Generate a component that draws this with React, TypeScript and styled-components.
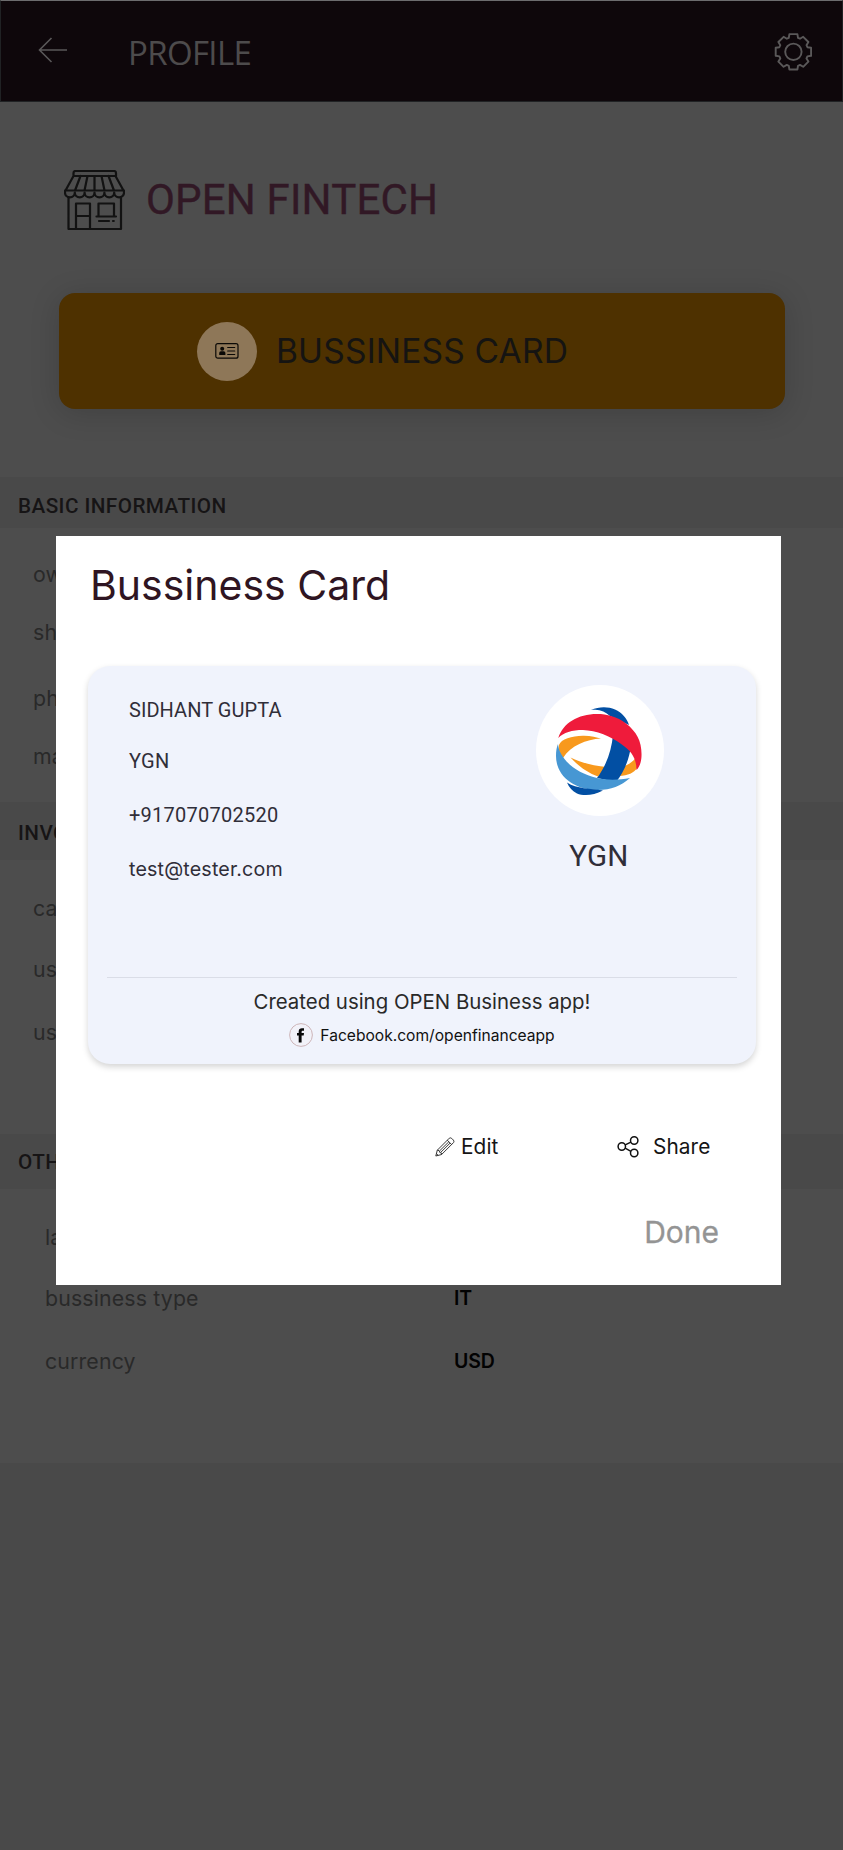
import React from "react";
import styled, { createGlobalStyle } from "styled-components";

const GlobalStyle = createGlobalStyle`
  * { box-sizing: border-box; }
  body { margin: 0; background: #494949; }
`;

const sans = `Roboto, "Open Sans", sans-serif`;
const wide = `Inter, Roboto, sans-serif`;

const Page = styled.div`
  position: relative;
  width: 843px;
  height: 1850px;
  overflow: hidden;
  background: #494949;
  font-family: ${sans};
`;

const Header = styled.header`
  display: flex;
  align-items: center;
  height: 102px;
  padding: 1px 30px 0 37px;
  background: #0e070b;
  border: 1px solid #202224;
  border-top-color: #6c6c6e;
`;

const HeaderTitle = styled.h1`
  flex: 1;
  margin: 2px 0 0 59px;
  font: 400 33px/44px "Open Sans", sans-serif;
  letter-spacing: -0.65px;
  color: #4d4b4c;
`;

const BackIcon = styled.svg`
  display: block;
  margin-bottom: 4px;
`;

const Hero = styled.section`
  height: 375px;
  padding: 68px 58px 0 59px;
  background: #4d4d4d;
`;

const Company = styled.div`
  display: flex;
  align-items: center;
  gap: 21px;
  padding-left: 5px;
`;

const CompanyName = styled.h2`
  margin: 0 0 2px;
  font-size: 42px;
  font-weight: 400;
  line-height: 59px;
  letter-spacing: 0.19px;
  color: #311825;
  -webkit-text-stroke: 0.4px #311825;
`;

const CardButton = styled.button`
  display: flex;
  align-items: center;
  gap: 19px;
  width: 726px;
  height: 116px;
  margin-top: 62px;
  padding: 0 0 0 138px;
  border: 0;
  border-radius: 16px;
  background: #4e3100;
  box-shadow: 0 4px 30px rgba(0, 0, 0, 0.16);
  font: 400 33.6px/40px ${wide};
  letter-spacing: 0.15px;
  color: #151412;
`;

const IconDisc = styled.span`
  display: flex;
  align-items: center;
  justify-content: center;
  width: 60px;
  height: 59px;
  border-radius: 50%;
  background: #8e7758;
`;

const Band = styled.h3<{ $height: number; $drop: number }>`
  display: flex;
  align-items: center;
  height: ${(p) => p.$height}px;
  margin: 0;
  padding: ${(p) => p.$drop}px 0 0 18px;
  background: #494949;
  font-size: 20.7px;
  font-weight: 500;
  line-height: 24px;
  letter-spacing: 0.44px;
  color: #161415;
`;

const Details = styled.dl`
  display: flex;
  flex-direction: column;
  height: 274px;
  margin: 0;
  background: #4d4d4d;
`;

const DetailRow = styled.div<{ $before: number; $indent: number }>`
  display: flex;
  height: 24px;
  margin-top: ${(p) => p.$before}px;
  padding-left: ${(p) => p.$indent}px;
  line-height: 24px;
  font-family: ${wide};
`;

const Label = styled.dt`
  width: 409px;
  font-size: 21.3px;
  letter-spacing: 0.15px;
  color: #292929;
`;

const Value = styled.dd`
  margin: 0;
  font-size: 19.5px;
  font-weight: 600;
  letter-spacing: -0.2px;
  color: #020202;
`;

const Modal = styled.div`
  position: absolute;
  left: 56px;
  top: 536px;
  width: 725px;
  height: 749px;
  padding: 24px 25px 0 32px;
  background: #fff;
`;

const ModalTitle = styled.h2`
  margin: 0;
  padding-left: 2px;
  font-family: ${wide};
  font-size: 41px;
  font-weight: 400;
  line-height: 50px;
  color: #2f1522;
`;

const BusinessCard = styled.article`
  width: 668px;
  height: 398px;
  margin-top: 56px;
  border-radius: 22px;
  background: #f0f3fc;
  box-shadow: 0 3px 6px rgba(0, 0, 0, 0.17);
`;

const CardTop = styled.div`
  display: flex;
  justify-content: space-between;
  height: 311px;
  padding: 19px 92px 0 41px;
`;

const Contact = styled.div`
  display: flex;
  flex-direction: column;
  padding-top: 13px;
`;

const ContactLine = styled.span<{ $before?: number; $spacing?: number }>`
  margin-top: ${(p) => p.$before ?? 0}px;
  font-size: 20px;
  line-height: 24px;
  letter-spacing: ${(p) => p.$spacing ?? 0}px;
  color: #302e39;
`;

const EmailLine = styled(ContactLine)`
  font-family: ${wide};
  font-size: 19.7px;
`;

const Brand = styled.div`
  display: flex;
  flex-direction: column;
  align-items: center;
  width: 128px;
`;

const BrandDisc = styled.div`
  display: flex;
  align-items: center;
  justify-content: center;
  width: 128px;
  height: 131px;
  border-radius: 50%;
  background: #fff;
`;

const BrandName = styled.div`
  margin-top: 22px;
  padding-right: 2px;
  font-size: 29.5px;
  line-height: 36px;
  letter-spacing: 0.3px;
  color: #302e39;
`;

const CardFooter = styled.footer`
  display: flex;
  flex-direction: column;
  align-items: center;
  margin: 0 19px;
  padding-top: 10px;
  border-top: 1px solid #dadde7;
  font-family: ${wide};
`;

const Credit = styled.div`
  font-size: 20.4px;
  line-height: 28px;
  color: #292929;
`;

const Social = styled.div`
  display: flex;
  align-items: flex-start;
  gap: 7px;
  margin-top: 7px;
  font-size: 15.6px;
  line-height: 24px;
  color: #111;
`;

const SocialName = styled.span`
  padding-top: 1px;
`;

const Actions = styled.div`
  display: flex;
  margin: 69px 0 0 347px;
`;

const Action = styled.button<{ $width: number; $gap: number }>`
  display: flex;
  align-items: center;
  gap: ${(p) => p.$gap}px;
  width: ${(p) => p.$width}px;
  padding: 0;
  border: 0;
  background: none;
  font: 400 20.8px/28px ${wide};
  letter-spacing: 0.1px;
  color: #151515;
`;

const DoneButton = styled.button`
  display: block;
  margin: 51px 37px 0 auto;
  padding: 0;
  border: 0;
  background: none;
  font: 400 30px/40px ${wide};
  color: #949494;
  -webkit-text-stroke: 0.3px #949494;
`;

const ArrowLeft = () => (
  <BackIcon width="31" height="28" viewBox="0 0 31 28" fill="none" stroke="#5a5859" strokeWidth="1.6">
    <path d="M13.5 2 1.5 14l12 12M1.5 14H29" />
  </BackIcon>
);

const quadrant = [[-4, -17.7], [4, -17.7], [4.6, -14], [6.6, -13.1], [9.8, -15], [15, -9.8], [13.1, -6.6], [14, -4.6]];
const gearPoints = [0, 1, 2, 3]
  .flatMap((turn) =>
    quadrant.map(([x, y]) => {
      let p = [x, y];
      for (let i = 0; i < turn; i++) p = [-p[1], p[0]];
      return p.join(",");
    })
  )
  .join(" ");

const Gear = () => (
  <svg width="38" height="38" viewBox="-19.4 -18.8 38 38" fill="none" stroke="#5a5859" strokeWidth="1.9" strokeLinejoin="round">
    <polygon points={gearPoints} />
    <circle r="8.2" />
  </svg>
);

const Shop = () => (
  <svg width="61" height="61" viewBox="0 0 61 61" fill="none" stroke="#121212" strokeWidth="2.2" strokeLinejoin="round" strokeLinecap="round">
    <path d="M9.5 6V3q0-2 2-2h38.500q2 0 2 2v3zM9.500 6 1.500 20.500h58L51.500 6M16.500 6 11 20.500M23.500 6l-3 14.500M30.500 6v14.500M37.500 6l3 14.500M44.500 6l5.500 14.500" />
    <path d="M1 20.500v2a4 4 0 0 0 9.800 0 4.200 4.200 0 0 0 9.800 0 4.200 4.200 0 0 0 9.900 0 4.200 4.200 0 0 0 9.900 0 4.200 4.200 0 0 0 9.800 0 4 4 0 0 0 9.800 0v-2" />
    <path d="M4.500 27.500v31.500h52.500V27.500M12 58.500V33.500h14v25M12 46h14M34.500 45.500v-12h15.500v12M32.500 46.500h19.500M35 51h10M49 51h.8" />
  </svg>
);

const IdCard = () => (
  <svg width="24" height="16" viewBox="0 0 24 16" fill="none" stroke="#0b0906" strokeWidth="1.2">
    <rect x="0.800" y="0.700" width="22.200" height="14.500" rx="2" />
    <path d="M12.700 4.500h7M12.700 8h7M12.700 11.500h7" strokeLinecap="round" />
    <circle cx="7.200" cy="5.700" r="2" fill="#0b0906" stroke="none" />
    <path d="M4.200 12V10q0-1.800 1.800-1.800h2.600q1.800 0 1.800 1.800v2z" fill="#0b0906" stroke="none" />
  </svg>
);

const Globe = () => (
  <svg width="100" height="100" viewBox="0 0 100 100">
    <path fill="#024fa3" d="M41 9C49 5.500 58 5.500 65 8.500c7 3 12 9 14 15.500L60 15c-5-5-11-7.300-19-6z" />
    <path fill="#f8991d" d="M9 44c2-6 14-9.500 25-9.200 7 .2 13 1.700 17 2.700-15 1-30 7-38 19.500-3-3-5-8-4-13z" />
    <path fill="#f8991d" d="M20.500 56.500C32 62 44 65 57 66l-9 9.500C38 72 28 65 20.500 56.500zM87 55.500c1.500 5 1 9 0 11.500-3 5-9 7.500-18 8l3-9c7-2 11.500-6 15-10.500z" />
    <path fill="#024fa3" d="M63 34 81 45c-2 14-7 26-15 36l-19-4c9-12 14.500-27 16-43z" />
    <path fill="#ef1b3b" d="M8.300 37C13 22 28 13 47 13c10 0 20 2.500 29 9.500C87 31 92 41 91.500 55c-.2 6-2 11-5 14 0-11-5-19-14-25C61 35 46 29.500 33 29c-11 0-19.500 2.500-24.700 8z" />
    <path fill="#4797d3" d="M8 43C9 57 25 72 47 77c11 2.500 22 2 33 0-9 8-19 12-32 12C24 89 6 75 6 55c0-5 .7-9 2-12z" />
    <path fill="#024fa3" d="M17 81.500C27 88 40 87.500 53 89.500c-10 5.500-20 5.500-26 3-4.500-2.500-8-6-10-11z" />
  </svg>
);

const Facebook = () => (
  <svg width="24" height="24" viewBox="0 0 24 24">
    <circle cx="12" cy="12" r="11.400" fill="#f2f2f9" stroke="#cdb5b9" strokeWidth="1" />
    <path fill="#0a0a0a" d="M9.700 19.500v-7H8v-2.600h1.700V8.500C9.700 6.300 11 5.300 13 5.300h2v2.500h-1.200c-.9 0-1.200.4-1.200 1.100v1H15l-.3 2.600h-2.100v7z" />
  </svg>
);

const Pencil = () => (
  <svg width="20" height="20" viewBox="0 0 20 20" fill="none" stroke="#222" strokeWidth="0.9" strokeLinejoin="round">
    <path d="M.8 19 2.300 13.200 14.300 1.200q1.200-.8 2.400.2l1.700 1.700q1 1.200.2 2.400L6.600 17.500zM2.300 13.200l2.100.600.4 1.700 1.500.400.3 1.600M12.300 3.200l4.300 4.300M4.800 13.700l9-8.900M6 15.100l9-8.900M1.500 16.800l1.700 1.500" />
  </svg>
);

const ShareNodes = () => (
  <svg width="22" height="22" viewBox="0 0 22 22" fill="none" stroke="#111" strokeWidth="1.500">
    <circle cx="4.800" cy="10.500" r="3.700" />
    <circle cx="17.200" cy="4.500" r="3.700" />
    <circle cx="17.200" cy="17" r="3.700" />
    <path d="m8.200 8.900 5.700-2.800M8.200 12.200l5.700 3.100" />
  </svg>
);

export default function App() {
  return (
    <Page>
      <GlobalStyle />
      <Header>
        <ArrowLeft />
        <HeaderTitle>PROFILE</HeaderTitle>
        <Gear />
      </Header>
      <Hero>
        <Company>
          <Shop />
          <CompanyName>OPEN FINTECH</CompanyName>
        </Company>
        <CardButton>
          <IconDisc>
            <IdCard />
          </IconDisc>
          BUSSINESS CARD
        </CardButton>
      </Hero>

      <Band $height={51} $drop={6}>BASIC INFORMATION</Band>
      <Details>
        <DetailRow $before={34} $indent={33}><Label>own</Label></DetailRow>
        <DetailRow $before={34} $indent={33}><Label>shop</Label></DetailRow>
        <DetailRow $before={42} $indent={33}><Label>phone</Label></DetailRow>
        <DetailRow $before={34} $indent={33}><Label>mail</Label></DetailRow>
      </Details>

      <Band $height={58} $drop={3}>INVOICE</Band>
      <Details>
        <DetailRow $before={36} $indent={33}><Label>category</Label></DetailRow>
        <DetailRow $before={37} $indent={33}><Label>user</Label></DetailRow>
        <DetailRow $before={39} $indent={33}><Label>user</Label></DetailRow>
      </Details>

      <Band $height={55} $drop={0}>OTHER</Band>
      <Details>
        <DetailRow $before={36} $indent={45}><Label>language</Label></DetailRow>
        <DetailRow $before={37} $indent={45}>
          <Label>bussiness type</Label>
          <Value>IT</Value>
        </DetailRow>
        <DetailRow $before={39} $indent={45}>
          <Label>currency</Label>
          <Value>USD</Value>
        </DetailRow>
      </Details>

      <Modal role="dialog">
        <ModalTitle>Bussiness Card</ModalTitle>
        <BusinessCard>
          <CardTop>
            <Contact>
              <ContactLine $spacing={0.05}>SIDHANT GUPTA</ContactLine>
              <ContactLine $before={27} $spacing={0.3}>YGN</ContactLine>
              <ContactLine $before={30} $spacing={0.25}>+917070702520</ContactLine>
              <EmailLine $before={30} $spacing={0.15}>test@tester.com</EmailLine>
            </Contact>
            <Brand>
              <BrandDisc>
                <Globe />
              </BrandDisc>
              <BrandName>YGN</BrandName>
            </Brand>
          </CardTop>
          <CardFooter>
            <Credit>Created using OPEN Business app!</Credit>
            <Social>
              <Facebook />
              <SocialName>Facebook.com/openfinanceapp</SocialName>
            </Social>
          </CardFooter>
        </BusinessCard>
        <Actions>
          <Action $width={182} $gap={6}>
            <Pencil />
            Edit
          </Action>
          <Action $width={100} $gap={14}>
            <ShareNodes />
            Share
          </Action>
        </Actions>
        <DoneButton>Done</DoneButton>
      </Modal>
    </Page>
  );
}
